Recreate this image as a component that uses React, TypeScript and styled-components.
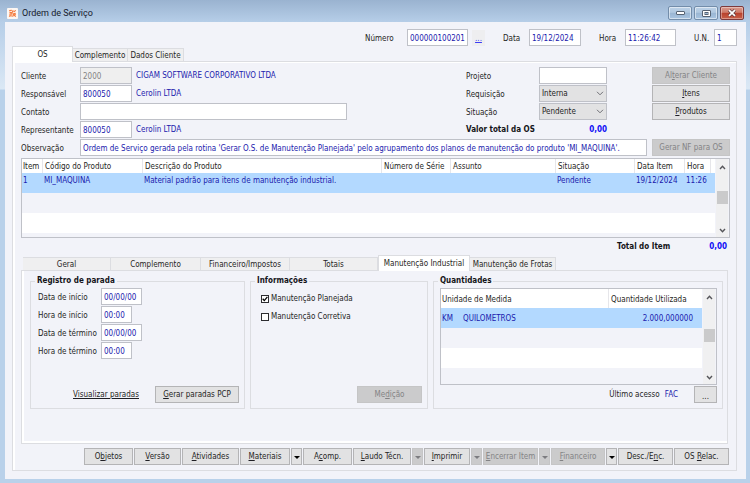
import React from 'react';
import styled, { createGlobalStyle, css } from 'styled-components';

const ui = '"DejaVu Sans Condensed", "DejaVu Sans", sans-serif';
const surface = '#f2f3f9';
const line = '#dcdde1';
const fieldLine = '#bfc1c8';
const ink = '#1f1f24';
const blue = '#1a1aad';

const GlobalStyle = createGlobalStyle`
  * { box-sizing: border-box; }
  body { margin: 0; background: #b9d1ea; }
  button, input, select { font: inherit; margin: 0; }
`;

const Window = styled.div`
  font: 8px/10px ${ui};
  color: ${ink};
  padding: 0 4px 4px 5px;
  background: linear-gradient(180deg, #9ab3d0 0, #b6cee8 22px, #dbe8f5 89px, #b9d1ea 90px, #b9d1ea 100%);
`;

const TitleBar = styled.header`
  display: flex;
  align-items: center;
  height: 22px;
  padding: 4px 2px 0 2px;
  gap: 4px;
`;

const Title = styled.h1`
  flex: 1;
  margin: 0;
  font: 9px/14px Roboto, sans-serif;
  color: #16202c;
`;

const WindowButtons = styled.div`
  display: flex;
  gap: 2px;
`;

const WindowButton = styled.button<{ $close?: boolean }>`
  display: flex;
  align-items: center;
  justify-content: center;
  width: 24px;
  height: 14px;
  padding: 0;
  border: 1px solid ${p => (p.$close ? '#7d3a3c' : '#738daa')};
  border-radius: 2px;
  box-shadow: inset 0 0 0 1px ${p => (p.$close ? 'rgba(255,255,255,.35)' : 'rgba(255,255,255,.5)')};
  background: ${p => (p.$close
    ? 'linear-gradient(#d99a8e 0, #cf7a69 45%, #b8402c 50%, #c8604a 100%)'
    : 'linear-gradient(#bdd2e8 0, #b0c8e0 45%, #9ab6d3 50%, #a9c5e1 100%)')};
`;

const Client = styled.main`
  background: ${surface};
  padding: 7px 9px 8px 7px;
`;

const HeaderFields = styled.div`
  display: flex;
  justify-content: flex-end;
  gap: 18px;
`;

const HeaderField = styled.div`
  display: flex;
  align-items: center;
`;

const HeaderLabel = styled.label<{ $w: number }>`
  width: ${p => p.$w}px;
  padding-top: 2px;
`;

const Input = styled.input<{ $w?: number }>`
  width: ${p => (p.$w ? `${p.$w}px` : '100%')};
  height: 17px;
  padding: 1px 2px 0;
  border: 1px solid ${fieldLine};
  border-radius: 0;
  background: #fff;
  color: ${blue};
  &:disabled { background: #efefef; color: #838383; }
`;

const LookupButton = styled.button`
  width: 13px;
  height: 16px;
  margin-left: 4px;
  padding: 2px 0 0;
  border: 0;
  background: #eeeef0;
  color: #3c3cf5;
  text-decoration: underline;
`;

const TabStrip = styled.div<{ $inset?: boolean }>`
  display: flex;
  align-items: flex-end;
  height: 15px;
  padding-left: ${p => (p.$inset ? 2 : 0)}px;
`;

const Tab = styled.button<{ $w: number; $active?: boolean }>`
  width: ${p => p.$w}px;
  height: 13px;
  padding: 2px 0 0;
  border: 1px solid ${line};
  border-width: 1px 1px 0 0;
  background: #efeff0;
  color: ${ink};
  white-space: nowrap;
  ${p => p.$active && css`
    z-index: 1;
    height: 16px;
    margin-bottom: -1px;
    padding: 1px 0;
    border-left-width: 1px;
    background: #fff;
  `}
`;

const OuterPanel = styled.section`
  border: 1px solid ${line};
  box-shadow: inset 2px 0 0 #fff, inset 0 1px 0 #fff;
  padding: 5px 6px 5px 8px;
`;

const FormGrid = styled.div`
  display: grid;
  grid-template-columns: 59px minmax(0, 1fr) 73px 68px 40px 5px 78px;
  grid-auto-rows: 17px;
  row-gap: 1px;
  align-items: center;
`;

const Cell = styled.div<{ $col: string; $row: number }>`
  grid-column: ${p => p.$col};
  grid-row: ${p => p.$row};
  display: flex;
  align-items: center;
  gap: 4px;
`;

const FormLabel = styled.label<{ $col: string; $row: number }>`
  grid-column: ${p => p.$col};
  grid-row: ${p => p.$row};
  padding-top: 2px;
`;

const BlueText = styled.span`
  color: ${blue};
`;

const Strong = styled.strong<{ $accent?: boolean }>`
  padding-top: 1px;
  color: ${p => (p.$accent ? '#0f0ff5' : '#141418')};
`;

const AmountCell = styled(Cell)`
  justify-content: flex-end;
`;

const SelectBox = styled.div`
  position: relative;
  width: 100%;
  svg { position: absolute; right: 3px; top: 6px; pointer-events: none; }
`;

const Select = styled.select`
  display: block;
  appearance: none;
  width: 100%;
  height: 17px;
  padding: 1px 2px 0;
  border: 1px solid ${fieldLine};
  border-radius: 0;
  background: #e2e2e3;
  color: ${ink};
`;

const Button = styled.button<{ $w?: number }>`
  flex: none;
  width: ${p => (p.$w ? `${p.$w}px` : '100%')};
  height: 17px;
  padding: 1px 0 0;
  border: 1px solid #b4b4b6;
  border-radius: 0;
  background: #e2e2e3;
  color: ${ink};
  white-space: nowrap;
  &:disabled { background: #cbcbcc; border-color: #c5c5c6; color: #838385; }
`;

const ArrowButton = styled(Button)`
  display: flex;
  align-items: center;
  justify-content: center;
`;

const MoreButton = styled(Button)`
  padding-top: 4px;
`;

const GridFrame = styled.div<{ $h: number }>`
  display: flex;
  height: ${p => p.$h}px;
  border: 1px solid ${fieldLine};
  background: ${surface};
  overflow: hidden;
`;

const ItemsFrame = styled(GridFrame)`
  margin-top: 2px;
`;

const GridBody = styled.div`
  flex: 1;
  min-width: 0;
`;

const Table = styled.table<{ $head: number }>`
  width: 100%;
  table-layout: fixed;
  border-collapse: collapse;
  th {
    height: ${p => p.$head}px;
    padding: 2px 2px 0;
    background: #fff;
    font-weight: normal;
    text-align: left;
    white-space: nowrap;
    box-shadow: inset -1px 0 0 #e6e6ea;
  }
  th:first-child { padding-left: 1px; }
  th:last-child { box-shadow: none; }
  td {
    height: 20px;
    padding: 3px 1px 0;
    vertical-align: top;
    white-space: nowrap;
    color: ${blue};
  }
`;

const Row = styled.tr<{ $tone: 'selected' | 'plain' | 'alt' }>`
  background: ${p => ({ selected: '#b3d9ff', plain: '#fff', alt: surface })[p.$tone]};
`;

const QuantityTable = styled(Table)`
  td { padding-top: 6px; }
  td:last-child { text-align: right; padding-right: 9px; }
`;

const Col = styled.col<{ $w?: number }>`
  width: ${p => (p.$w ? `${p.$w}px` : 'auto')};
`;

const ScrollBar = styled.div`
  display: flex;
  flex-direction: column;
  align-items: center;
  width: 12px;
  margin: 0 1px;
  padding: 6px 0 4px;
  background: #f0f0f1;
`;

const Thumb = styled.div<{ $top: number }>`
  width: 11px;
  height: 13px;
  margin: ${p => p.$top}px 0 auto;
  background: #cacacb;
`;

const TotalRow = styled.div`
  display: flex;
  justify-content: flex-end;
  align-items: center;
  gap: 39px;
  height: 17px;
  padding-right: 3px;
`;

const InnerPanel = styled.section`
  display: grid;
  grid-template-columns: 215fr 178fr 290fr;
  gap: 5px;
  margin-right: 2px;
  padding: 4px 4px 34px 8px;
  border: 1px solid ${line};
  box-shadow: inset 2px -2px 0 #fff;
`;

const Group = styled.fieldset`
  display: flex;
  min-width: 0;
  margin: 0;
  padding: 0;
  border: 1px solid ${line};
`;

const Legend = styled.legend`
  margin-left: 4px;
  padding: 0 2px;
  line-height: 12px;
  font-weight: bold;
  color: #141418;
`;

const GroupBody = styled.div`
  flex: 1;
  display: flex;
  flex-direction: column;
  min-width: 0;
  min-height: 121px;
  padding: 1px 5px 5px 6px;
`;

const StopFields = styled.div`
  display: grid;
  grid-template-columns: 63px auto;
  grid-auto-rows: 17px;
  justify-content: start;
  align-items: center;
  gap: 1px 0;
  padding-left: 1px;
  label { padding-top: 2px; }
`;

const GroupFooter = styled.div`
  display: flex;
  align-items: center;
  justify-content: flex-end;
  gap: 16px;
  margin-top: auto;
`;

const TextLink = styled.a`
  color: ${ink};
  text-decoration: underline;
`;

const Checks = styled.div`
  display: grid;
  gap: 8px;
  padding: 6px 0 0 4px;
`;

const Check = styled.label`
  display: flex;
  align-items: center;
  gap: 2px;
`;

const CheckBox = styled.input`
  appearance: none;
  width: 8px;
  height: 8px;
  border: 1px solid #2c2c30;
  background: #fff;
  &:checked {
    background: #fff url("data:image/svg+xml,%3Csvg xmlns='http://www.w3.org/2000/svg' viewBox='0 0 6 6'%3E%3Cpath d='M.7 2.8 2.3 4.6 5.4 .9' fill='none' stroke='%23000' stroke-width='1.3'/%3E%3C/svg%3E") center / 6px 6px no-repeat;
  }
`;

const LastAccess = styled.div`
  display: flex;
  gap: 5px;
`;

const Toolbar = styled.footer`
  display: flex;
  justify-content: flex-end;
  gap: 1px;
  margin-top: 4px;
  padding-right: 1px;
`;

const Chevron = ({ up }: { up?: boolean }) => (
  <svg width="7" height="5" viewBox="0 0 7 5" fill="none" stroke="#55555a" strokeWidth="1.4" aria-hidden>
    <path d={up ? 'M1 4 3.5 1.3 6 4' : 'M1 1 3.5 3.7 6 1'} />
  </svg>
);

const SelectChevron = () => (
  <svg width="8" height="5" viewBox="0 0 8 5" fill="none" stroke="#707076" aria-hidden>
    <path d="M1 .8 4 3.8 7 .8" />
  </svg>
);

const Caret = ({ off }: { off?: boolean }) => (
  <svg width="6" height="3" viewBox="0 0 6 3" fill={off ? '#7c7c80' : '#000'} aria-hidden>
    <path d="M0 0h6L3 3z" />
  </svg>
);

const AppIcon = () => (
  <svg width="11" height="11" viewBox="0 0 11 11" aria-hidden>
    <rect width="11" height="11" rx="1" fill="#fdf7f3" />
    <g fill="none" stroke="#f47a3c" strokeWidth="1.1">
      <path d="M2.2 2.6 4.8 2.4M2.4 4.2 5 4.8 6.2 2.2M6.6 4 8.8 2.4M2.2 6.2 4.2 5.8 4 8.8M2.2 8.6 3.2 7.2M5.4 6 8.8 5.2M5.6 8.8 6.4 6.6 8.8 8.6M7.4 6.4 8.8 6.8" />
    </g>
  </svg>
);

const Scroll = ({ top }: { top: number }) => (
  <ScrollBar>
    <Chevron up />
    <Thumb $top={top} />
    <Chevron />
  </ScrollBar>
);

const headerFields = [
  { id: 'numero', label: 'Número', lw: 42, w: 61, value: '000000100201', lookup: true },
  { id: 'data', label: 'Data', lw: 26, w: 52, value: '19/12/2024' },
  { id: 'hora', label: 'Hora', lw: 26, w: 51, value: '11:26:42' },
  { id: 'un', label: 'U.N.', lw: 20, w: 23, value: '1' },
];

const stopFields = [
  { id: 'di', label: 'Data de início', w: 41, value: '00/00/00' },
  { id: 'hi', label: 'Hora de início', w: 31, value: '00:00' },
  { id: 'dt', label: 'Data de término', w: 41, value: '00/00/00' },
  { id: 'ht', label: 'Hora de término', w: 31, value: '00:00' },
];

const itemColumns = [
  { name: 'Item', w: 21, value: '1' },
  { name: 'Código do Produto', w: 100, value: 'MI_MAQUINA' },
  { name: 'Descrição do Produto', value: 'Material padrão para itens de manutenção industrial.' },
  { name: 'Número de Série', w: 69, value: '' },
  { name: 'Assunto', w: 105, value: '' },
  { name: 'Situação', w: 79, value: 'Pendente' },
  { name: 'Data Item', w: 50, value: '19/12/2024' },
  { name: 'Hora', w: 26, value: '11:26' },
  { name: '', w: 4, value: '' },
];

const detailTabs = [
  { name: 'Geral', w: 88 },
  { name: 'Complemento', w: 90 },
  { name: 'Financeiro/Impostos', w: 89 },
  { name: 'Totais', w: 88 },
  { name: 'Manutenção Industrial', w: 92, active: true },
  { name: 'Manutenção de Frotas', w: 86 },
];

type Action = { pre?: string; key?: string; post?: string; w: number; off?: boolean; caret?: boolean };
const actions: Action[] = [
  { pre: 'O', key: 'b', post: 'jetos', w: 49 },
  { key: 'V', post: 'ersão', w: 47 },
  { key: 'A', post: 'tividades', w: 57 },
  { key: 'M', post: 'ateriais', w: 50 },
  { caret: true, w: 11 },
  { pre: 'A', key: 'c', post: 'omp.', w: 49 },
  { key: 'L', post: 'audo Técn.', w: 58 },
  { caret: true, off: true, w: 11 },
  { key: 'I', post: 'mprimir', w: 46 },
  { caret: true, off: true, w: 11 },
  { key: 'E', post: 'ncerrar Item', w: 55, off: true },
  { caret: true, off: true, w: 11 },
  { key: 'F', post: 'inanceiro', w: 54, off: true },
  { caret: true, w: 11 },
  { pre: 'Desc./E', key: 'n', post: 'c.', w: 55 },
  { pre: 'OS ', key: 'R', post: 'elac.', w: 55 },
];

export default function App() {
  return (
    <>
      <GlobalStyle />
      <Window>
        <TitleBar>
          <AppIcon />
          <Title>Ordem de Serviço</Title>
          <WindowButtons>
            <WindowButton aria-label="Minimizar">
              <svg width="9" height="4" viewBox="0 0 9 4" aria-hidden><rect x=".5" y=".5" width="8" height="3" rx=".5" fill="#fff" stroke="#566373" /></svg>
            </WindowButton>
            <WindowButton aria-label="Maximizar">
              <svg width="9" height="7" viewBox="0 0 9 7" aria-hidden><rect x=".5" y=".5" width="8" height="6" rx=".5" fill="#fff" stroke="#566373" /><rect x="3" y="2.5" width="3" height="2" fill="#9ab6d3" stroke="#566373" /></svg>
            </WindowButton>
            <WindowButton $close aria-label="Fechar">
              <svg width="10" height="8" viewBox="0 0 10 8" fill="none" aria-hidden><path d="M2 1.2 8 6.8M8 1.2 2 6.8" stroke="#5a3a40" strokeWidth="3.2" /><path d="M2 1.2 8 6.8M8 1.2 2 6.8" stroke="#fff" strokeWidth="1.8" /></svg>
            </WindowButton>
          </WindowButtons>
        </TitleBar>

        <Client>
          <HeaderFields>
            {headerFields.map(f => (
              <HeaderField key={f.id}>
                <HeaderLabel htmlFor={f.id} $w={f.lw}>{f.label}</HeaderLabel>
                <Input id={f.id} $w={f.w} defaultValue={f.value} />
                {f.lookup && <LookupButton aria-label="Buscar número">...</LookupButton>}
              </HeaderField>
            ))}
          </HeaderFields>

          <TabStrip role="tablist">
            <Tab role="tab" aria-selected $w={61} $active>OS</Tab>
            <Tab role="tab" $w={55}>Complemento</Tab>
            <Tab role="tab" $w={56}>Dados Cliente</Tab>
          </TabStrip>

          <OuterPanel>
            <FormGrid>
              <FormLabel $col="1" $row={1} htmlFor="cliente">Cliente</FormLabel>
              <Cell $col="2" $row={1}><Input id="cliente" $w={52} defaultValue="2000" disabled /><BlueText>CIGAM SOFTWARE CORPORATIVO LTDA</BlueText></Cell>
              <FormLabel $col="1" $row={2} htmlFor="responsavel">Responsável</FormLabel>
              <Cell $col="2" $row={2}><Input id="responsavel" $w={52} defaultValue="800050" /><BlueText>Cerolin LTDA</BlueText></Cell>
              <FormLabel $col="1" $row={3} htmlFor="contato">Contato</FormLabel>
              <Cell $col="2" $row={3}><Input id="contato" $w={267} /></Cell>
              <FormLabel $col="1" $row={4} htmlFor="representante">Representante</FormLabel>
              <Cell $col="2" $row={4}><Input id="representante" $w={52} defaultValue="800050" /><BlueText>Cerolin LTDA</BlueText></Cell>
              <FormLabel $col="1" $row={5} htmlFor="observacao">Observação</FormLabel>
              <Cell $col="2 / 6" $row={5}>
                <Input id="observacao" defaultValue="Ordem de Serviço gerada pela rotina 'Gerar O.S. de Manutenção Planejada' pelo agrupamento dos planos de manutenção do produto 'MI_MAQUINA'." />
              </Cell>

              <FormLabel $col="3" $row={1} htmlFor="projeto">Projeto</FormLabel>
              <Cell $col="4" $row={1}><Input id="projeto" /></Cell>
              <FormLabel $col="3" $row={2} htmlFor="requisicao">Requisição</FormLabel>
              <Cell $col="4" $row={2}><SelectBox><Select id="requisicao"><option>Interna</option></Select><SelectChevron /></SelectBox></Cell>
              <FormLabel $col="3" $row={3} htmlFor="situacao">Situação</FormLabel>
              <Cell $col="4" $row={3}><SelectBox><Select id="situacao"><option>Pendente</option></Select><SelectChevron /></SelectBox></Cell>
              <Cell $col="3" $row={4}><Strong>Valor total da OS</Strong></Cell>
              <AmountCell $col="4" $row={4}><Strong $accent>0,00</Strong></AmountCell>

              <Cell $col="7" $row={1}><Button disabled>Al<u>t</u>erar Cliente</Button></Cell>
              <Cell $col="7" $row={2}><Button><u>I</u>tens</Button></Cell>
              <Cell $col="7" $row={3}><Button><u>P</u>rodutos</Button></Cell>
              <Cell $col="7" $row={5}><Button disabled>Gerar NF para OS</Button></Cell>
            </FormGrid>

            <ItemsFrame $h={80}>
              <GridBody>
                <Table $head={14}>
                  <colgroup>{itemColumns.map(c => <Col key={c.name} $w={c.w} />)}</colgroup>
                  <thead><tr>{itemColumns.map(c => <th key={c.name}>{c.name}</th>)}</tr></thead>
                  <tbody>
                    <Row $tone="selected">{itemColumns.map(c => <td key={c.name}>{c.value}</td>)}</Row>
                    <Row $tone="alt"><td colSpan={9} /></Row>
                    <Row $tone="plain"><td colSpan={9} /></Row>
                  </tbody>
                </Table>
              </GridBody>
              <Scroll top={21} />
            </ItemsFrame>

            <TotalRow><Strong>Total do Item</Strong><Strong $accent>0,00</Strong></TotalRow>

            <TabStrip role="tablist" $inset>
              {detailTabs.map(t => (
                <Tab key={t.name} role="tab" aria-selected={!!t.active} $w={t.w} $active={t.active}>{t.name}</Tab>
              ))}
            </TabStrip>

            <InnerPanel>
              <Group>
                <Legend>Registro de parada</Legend>
                <GroupBody>
                  <StopFields>
                    {stopFields.map(f => (
                      <React.Fragment key={f.id}>
                        <label htmlFor={f.id}>{f.label}</label>
                        <Input id={f.id} $w={f.w} defaultValue={f.value} />
                      </React.Fragment>
                    ))}
                  </StopFields>
                  <GroupFooter>
                    <TextLink href="#paradas">Visualizar paradas</TextLink>
                    <Button $w={84}><u>G</u>erar paradas PCP</Button>
                  </GroupFooter>
                </GroupBody>
              </Group>

              <Group>
                <Legend>Informações</Legend>
                <GroupBody>
                  <Checks>
                    <Check><CheckBox type="checkbox" defaultChecked />Manutenção Planejada</Check>
                    <Check><CheckBox type="checkbox" />Manutenção Corretiva</Check>
                  </Checks>
                  <GroupFooter><Button $w={65} disabled>Me<u>d</u>ição</Button></GroupFooter>
                </GroupBody>
              </Group>

              <Group>
                <Legend>Quantidades</Legend>
                <GroupBody>
                  <GridFrame $h={97}>
                    <GridBody>
                      <QuantityTable $head={19}>
                        <colgroup><Col $w={21} /><Col /><Col $w={93} /></colgroup>
                        <thead><tr><th colSpan={2}>Unidade de Medida</th><th>Quantidade Utilizada</th></tr></thead>
                        <tbody>
                          <Row $tone="selected"><td>KM</td><td>QUILOMETROS</td><td>2.000,000000</td></Row>
                          <Row $tone="alt"><td colSpan={3} /></Row>
                          <Row $tone="plain"><td colSpan={3} /></Row>
                        </tbody>
                      </QuantityTable>
                    </GridBody>
                    <Scroll top={29} />
                  </GridFrame>
                  <GroupFooter>
                    <LastAccess><span>Último acesso</span><BlueText>FAC</BlueText></LastAccess>
                    <MoreButton $w={23} aria-label="Detalhes do acesso">...</MoreButton>
                  </GroupFooter>
                </GroupBody>
              </Group>
            </InnerPanel>

            <Toolbar>
              {actions.map((a, i) => (a.caret
                ? <ArrowButton key={i} $w={a.w} disabled={a.off} aria-label="Mais opções"><Caret off={a.off} /></ArrowButton>
                : <Button key={i} $w={a.w} disabled={a.off}>{a.pre}<u>{a.key}</u>{a.post}</Button>))}
            </Toolbar>
          </OuterPanel>
        </Client>
      </Window>
    </>
  );
}
